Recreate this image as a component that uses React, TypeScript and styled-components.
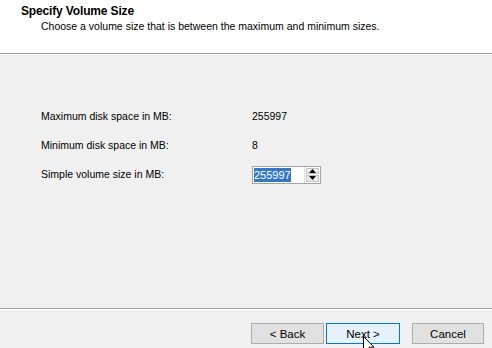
import { createGlobalStyle } from 'styled-components';
import styled from 'styled-components';

const Global = createGlobalStyle`
    html, body {
        margin: 0;
        padding: 0;
        background: #f0f0f0;
    }
    body {
        font-family: "Liberation Sans", Arial, sans-serif;
        font-size: 10.5px;
        color: #000;
    }
`;

export default function App() {
    return (
        <>
            <Global />
            <Wizard>
                <Header>
                    <h1>Specify Volume Size</h1>
                    <p>Choose a volume size that is between the maximum and minimum sizes.</p>
                </Header>
                <Body>
                    <Fields>
                        <Label>Maximum disk space in MB:</Label>
                        <Value>255997</Value>
                        <Label>Minimum disk space in MB:</Label>
                        <Value>8</Value>
                        <Label>Simple volume size in MB:</Label>
                        <Spinner>
                            <SpinInput>
                                <Selected>255997</Selected>
                            </SpinInput>
                            <SpinButtons>
                                <SpinButton>
                                    <svg width="7" height="4" viewBox="0 0 7 4">
                                        <path d="M0 4 L3.5 0 L7 4 Z" fill="#000" />
                                    </svg>
                                </SpinButton>
                                <SpinButton>
                                    <svg width="7" height="4" viewBox="0 0 7 4">
                                        <path d="M0 0 L3.5 4 L7 0 Z" fill="#000" />
                                    </svg>
                                </SpinButton>
                            </SpinButtons>
                        </Spinner>
                    </Fields>
                </Body>
                <Footer>
                    <Button $width={73}>&lt; Back</Button>
                    <Button $width={74} $focused>
                        Next &gt;
                        <Cursor width="12" height="19" viewBox="0 0 12 19">
                            <path d="M0.5 0.5 L0.5 15.5 L4 12 L6.5 18 L8.5 17 L6 11.2 L11 11.2 Z" fill="#fff" stroke="#000" strokeWidth="1" />
                        </Cursor>
                    </Button>
                    <Button $width={72} $gapLeft>Cancel</Button>
                </Footer>
            </Wizard>
        </>
    );
}

const Wizard = styled.div`
    display: flex;
    flex-direction: column;
    width: 492px;
    height: 348px;
    background: #f0f0f0;
    overflow: hidden;
`;
const Header = styled.div`
    background: #fff;
    height: 54px;
    border-bottom: 1px solid #a0a0a0;
    box-sizing: border-box;
    padding: 4px 0 0 21px;
    h1 {
        margin: 0;
        font-size: 12px;
        letter-spacing: -0.15px;
        font-weight: bold;
        line-height: 15px;
    }
    p {
        margin: 0;
        padding-left: 20px;
        font-size: 10.5px;
        line-height: 14px;
    }
`;
const Body = styled.div`
    flex: 1;
    border-top: 1px solid #fff;
    border-bottom: 1px solid #a0a0a0;
    padding: 46px 0 0 41px;
`;
const Fields = styled.div`
    display: grid;
    grid-template-columns: 211px auto;
    grid-auto-rows: 29px;
    align-items: center;
`;
const Label = styled.div`
    font-size: 10.5px;
`;
const Value = styled.div`
    font-size: 10.5px;
`;
const Spinner = styled.div`
    display: flex;
    align-items: stretch;
    width: 69px;
    height: 18px;
    border: 1px solid #a5a5a5;
    background: #fff;
    box-sizing: border-box;
    margin-top: 2px;
`;
const SpinInput = styled.div`
    flex: 1;
    display: flex;
    align-items: center;
    padding-left: 1px;
    border-right: 1px solid #dcdcdc;
`;
const Selected = styled.span`
    background: #3379c4;
    color: #fff;
    font-size: 11px;
    line-height: 14px;
`;
const SpinButtons = styled.div`
    display: flex;
    flex-direction: column;
    width: 13px;
    padding: 1px;
    gap: 1px;
`;
const SpinButton = styled.div`
    flex: 1;
    display: flex;
    align-items: center;
    justify-content: center;
    background: #ececec;
    border: 1px solid #c4c4c4;
`;
const Footer = styled.div`
    display: flex;
    justify-content: flex-end;
    align-items: flex-start;
    gap: 2px;
    padding: 13px 8px 0 0;
    border-top: 1px solid #fff;
    box-sizing: content-box;
    flex: none;
    height: 25px;
`;
const Button = styled.div<{ $width: number; $focused?: boolean; $gapLeft?: boolean }>`
    position: relative;
    width: ${p => p.$width}px;
    height: 21px;
    box-sizing: border-box;
    display: flex;
    align-items: center;
    justify-content: center;
    font-size: 11.5px;
    background: ${p => (p.$focused ? '#e5f1fb' : '#e1e1e1')};
    border: 1px solid ${p => (p.$focused ? '#0078d7' : '#adadad')};
    margin-left: ${p => (p.$gapLeft ? '10px' : '0')};
`;
const Cursor = styled.svg`
    position: absolute;
    left: 36px;
    top: 12px;
`;
